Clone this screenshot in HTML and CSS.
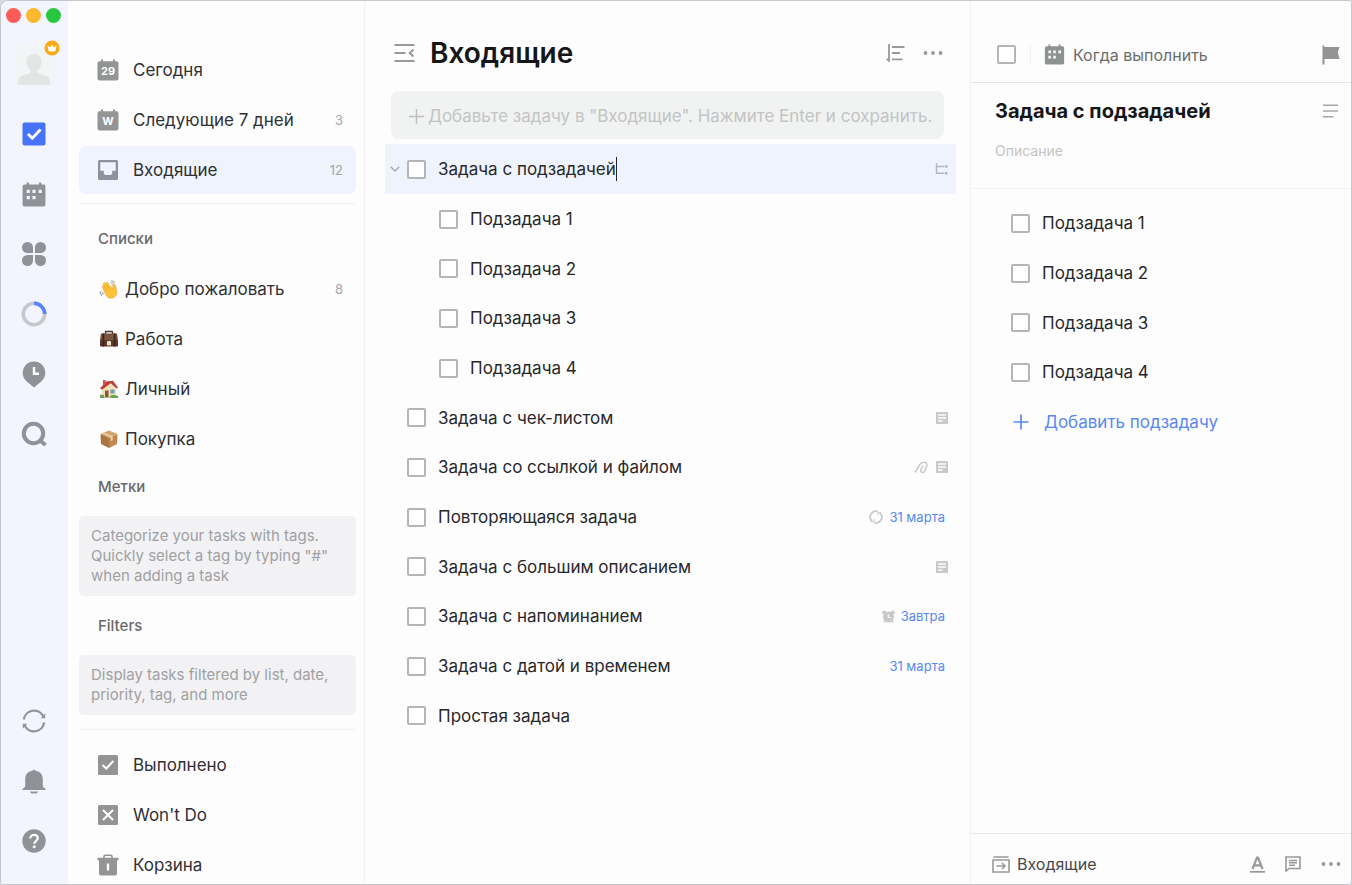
FILE: index.html
```html
<!DOCTYPE html>
<html lang="ru">
<head>
<meta charset="utf-8">
<meta name="viewport" content="width=device-width, initial-scale=1">
<title>Входящие</title>
<link rel="stylesheet" href="styles.css">
</head>
<body>
<svg class="defs" aria-hidden="true">
  <symbol id="i-note" viewBox="0 0 12 12"><path fill="currentColor" fill-rule="evenodd" d="M.5 0h11a.5.5 0 0 1 .5.5v11a.5.5 0 0 1-.5.5H.5a.5.5 0 0 1-.5-.5V.5A.5.500 0 0 1 .5 0zM2 2.300v1.500h8V2.300zM2 5.200v1.500h8V5.200zM2 8.300v1.500h4.500V8.300z"/></symbol>
  <symbol id="i-dots" viewBox="0 0 20 6"><g fill="currentColor"><circle cx="2.500" cy="3" r="1.900"/><circle cx="10" cy="3" r="1.900"/><circle cx="17.500" cy="3" r="1.900"/></g></symbol>
  <symbol id="i-calendar" viewBox="0 0 24 24"><path fill="currentColor" fill-rule="evenodd" d="M5 0.500h2.200V2.500h9.600V.5H19v2h2a2 2 0 0 1 2 2V21.500a2 2 0 0 1-2 2H3a2 2 0 0 1-2-2v-17a2 2 0 0 1 2-2h2zM5 7.500v3h3v-3zM10.500 7.500v3h3v-3zM16.500 7.500v3h3v-3zM5 13.500v3h3v-3zM10.500 13.500v3h3v-3z"/></symbol>
  <symbol id="i-day" viewBox="0 0 22 22"><path fill="currentColor" d="M4 .5h2v1.800h10V.5h2v1.800h1.500A2 2 0 0 1 21.500 4.300v15.200a2 2 0 0 1-2 2h-17a2 2 0 0 1-2-2V4.300a2 2 0 0 1 2-2H4z"/></symbol>
</svg>

<div class="app">
  <nav class="rail" aria-label="Разделы">
    <div class="lights">
      <button class="light red" aria-label="Закрыть"></button>
      <button class="light yellow" aria-label="Свернуть"></button>
      <button class="light green" aria-label="Развернуть"></button>
    </div>
    <button class="avatar" aria-label="Профиль">
      <svg width="40" height="40" viewBox="0 0 40 40"><rect width="40" height="40" rx="5" fill="#f3f4f5"/><path fill="#e3e4e4" d="M20 9c4.500 0 7.500 3 7.500 7.500 0 4-1.500 7-4 9v2.500c4 2 11 2 12 6.500l.5 5.500H4l.5-5.500c1-4.500 8-4.500 12-6.500v-2.500c-2.500-2-4-5-4-9C12.500 12 15.500 9 20 9z"/></svg>
      <svg class="crown" width="16" height="16" viewBox="0 0 16 16"><circle cx="8" cy="8" r="7.500" fill="#f9aa13"/><path fill="#fff" d="M3.500 5.500l2.500 2 2-3 2 3 2.500-2-1 5.500q-3.500 1-7 0z"/></svg>
    </button>
    <div class="rail-icons">
      <button aria-label="Задачи"><svg width="24" height="24" viewBox="0 0 24 24"><rect x=".5" y=".5" width="23" height="23" rx="2" fill="#4772fa"/><path d="M6 12l4.300 4.300L18.500 7.500" fill="none" stroke="#fff" stroke-width="2.800"/></svg></button>
      <button aria-label="Календарь"><svg width="26" height="25"><use href="#i-calendar"/></svg></button>
      <button aria-label="Матрица"><svg width="24" height="24" viewBox="0 0 24 24" fill="currentColor"><path d="M5.500 0A5.500 5.500 0 0 1 11 5.500V11H5.500a5.500 5.500 0 0 1 0-11zM18.500 0a5.500 5.500 0 0 1 0 11H13V5.500A5.500 5.500 0 0 1 18.500 0zM5.500 13H11v5.500A5.500 5.500 0 1 1 5.500 13zM13 13h5.500a5.500 5.500 0 1 1-5.500 5.500z"/></svg></button>
      <button aria-label="Фокус"><svg width="26" height="26" viewBox="0 0 26 26" fill="none" stroke-width="3.600"><circle cx="13" cy="13" r="10.700" stroke="#c6c8cc"/><path d="M13 2.300A10.700 10.700 0 0 1 23.700 13" stroke="#5585fa"/></svg></button>
      <button aria-label="Хронология"><svg width="24" height="27" viewBox="0 0 24 27"><path fill="currentColor" d="M12 .5a11.300 11.300 0 0 1 11.300 11.300c0 4.500-2.500 7.500-5 9.500L12 26.500l-6.300-5.200c-2.500-2-5-5-5-9.500A11.300 11.300 0 0 1 12 .5z"/><path d="M12 6v6.700h5" fill="none" stroke="#fff" stroke-width="2.400"/></svg></button>
      <button aria-label="Поиск"><svg width="26" height="26" viewBox="0 0 26 26" fill="none" stroke="currentColor"><circle cx="12.500" cy="12.500" r="9.700" stroke-width="4"/><path d="M18 18.500l6.500 5.500" stroke-width="3.800"/></svg></button>
    </div>
    <div class="rail-icons bottom">
      <button aria-label="Синхронизация"><svg width="24" height="24" viewBox="0 0 24 24" fill="none" stroke="currentColor" stroke-width="2.200"><path d="M1.800 10.500A10.300 10.300 0 0 1 21.300 7.500M22.200 13.500A10.300 10.300 0 0 1 2.700 16.500"/><path fill="currentColor" stroke="none" d="M18.800 9.300h4.400V4.300zM5.200 14.700H.8v5z"/></svg></button>
      <button aria-label="Уведомления"><svg width="24" height="25" viewBox="0 0 24 25" fill="currentColor"><path d="M12 .5l1.800 1.300c4.500.8 7 4 7 8.500v7.400L23.500 20v1H.5v-1l2.700-2.300v-7.400c0-4.500 2.500-7.700 7-8.500zM8 22.500h8v.5q-1 1.500-2.500 1.500h-3Q9 24.500 8 23z"/></svg></button>
      <button aria-label="Справка"><svg width="24" height="24" viewBox="0 0 24 24"><circle cx="12" cy="12" r="11.700" fill="currentColor"/><path d="M8.300 9.500c0-5 7.500-4.500 7.500-.3 0 2.500-3.600 2.800-3.600 5.600" fill="none" stroke="#fff" stroke-width="2.200"/><circle cx="12.200" cy="17.800" r="1.500" fill="#fff"/></svg></button>
    </div>
  </nav>

  <aside class="sidebar">
    <ul class="nav">
      <li><a class="item" href="#"><span class="day"><svg width="22" height="22"><use href="#i-day"/></svg><b>29</b></span><span class="name">Сегодня</span></a></li>
      <li><a class="item" href="#"><span class="day"><svg width="22" height="22"><use href="#i-day"/></svg><b>W</b></span><span class="name">Следующие 7 дней</span><span class="count">3</span></a></li>
      <li><a class="item active" href="#" aria-current="page"><svg width="22" height="22" viewBox="0 0 22 22"><path fill="currentColor" fill-rule="evenodd" d="M2.500 1h17A1.500 1.500 0 0 1 21 2.500v17a1.500 1.500 0 0 1-1.500 1.500h-17A1.500 1.500 0 0 1 1 19.500v-17A1.500 1.500 0 0 1 2.500 1zM3.300 3.300v8.500h3.500v2.400q0 1.800 1.800 1.800h4.800q1.800 0 1.800-1.800v-2.400h3.500V3.300z"/></svg><span class="name">Входящие</span><span class="count">12</span></a></li>
    </ul>
    <hr class="rule">
    <h2 class="heading">Списки</h2>
    <ul class="nav">
      <li><a class="item emoji" href="#"><svg width="20" height="20" viewBox="0 0 20 20"><path fill="#fbc43a" stroke="#e49a1e" stroke-width=".6" d="M3.500 8.500c-.8-1.400.8-2.400 1.800-1.200l-.8-1.800c-.7-1.500 1.200-2.400 2-1l.5.700c-.5-1.500 1.200-2.300 2.100-.9l4.600 5.900.1-3.400c0-1.900 2.300-2.100 2.700-.2l1.200 5.600c.6 3-1 5.400-3.500 6.500-2.400 1-5.200.4-6.700-1.700z"/><path d="M5 7.500l4 5M7 5.500l4.200 5.200" stroke="#e49a1e" stroke-width=".7"/><path d="M12 1.500q2.500.3 3.500 2.500M11.500 3.500q1.700.2 2.300 1.700M1 12.500q0 2.500 2.200 4M3 12.500q.3 1.700 1.700 2.600" fill="none" stroke="#9fa2a8" stroke-width="1.200"/></svg><span class="name">Добро пожаловать</span><span class="count">8</span></a></li>
      <li><a class="item emoji" href="#"><svg width="20" height="20" viewBox="0 0 20 20"><path d="M6.500 5V3.200q0-.7.7-.7h5.600q.7 0 .7.700V5" fill="none" stroke="#4b3328" stroke-width="1.400"/><path fill="#79543f" d="M2 4.500h16l1 6.500v6H1v-6z"/><path fill="#5a3a2d" d="M1 11h18v6.500H1z"/><path fill="#38251f" d="M3.500 4.500h1.800v13H3.500zM14.700 4.500h1.800v13h-1.800z"/><rect x="8" y="12" width="4" height="4.500" rx=".8" fill="#f0ddc9"/></svg><span class="name">Работа</span></a></li>
      <li><a class="item emoji" href="#"><svg width="20" height="20" viewBox="0 0 20 20"><path fill="#efe0bb" d="M3 8l6-5 8 5v10H3z"/><path fill="#bd3d39" d="M1 9.500L7 2.500l7-.8 5 7-1.300.8-6-5.200-8.500 6.200z"/><path fill="#d7514a" d="M4 1h2.500v4L4 7z"/><path fill="#89563a" d="M6 11.500h3.500V18H6z"/><path fill="#6f9fb5" d="M11.500 10.500h4v4h-4z"/><path fill="#67a546" d="M1 16.500q2-2 4 0V19H1zM11 17q3-2 8 0v2h-8z"/><path fill="#b9b2a5" d="M5 18h7v1H5z"/></svg><span class="name">Личный</span></a></li>
      <li><a class="item emoji" href="#"><svg width="20" height="20" viewBox="0 0 20 20"><path fill="#d5a36b" d="M1.500 5L10 1.500 18.500 5 10 9z"/><path fill="#a87543" d="M1.500 5L10 9v10L2 15z"/><path fill="#bf8850" d="M18.500 5L10 9v10l8-4z"/><path fill="#efd5a7" d="M5 3.600L13.700 7.300v4l-1.900.8V8.200L3.300 4.300z"/></svg><span class="name">Покупка</span></a></li>
    </ul>
    <h2 class="heading tags">Метки</h2>
    <p class="hint">Categorize your tasks with tags. Quickly select a tag by typing "#" when adding a task</p>
    <h2 class="heading filters">Filters</h2>
    <p class="hint">Display tasks filtered by list, date, priority, tag, and more</p>
    <hr class="rule low">
    <ul class="nav last">
      <li><a class="item" href="#"><svg width="22" height="22" viewBox="0 0 22 22"><rect x="1" y="1" width="20" height="20" rx="1.500" fill="currentColor"/><path d="M5.500 11l3.800 3.500 7-7.500" fill="none" stroke="#fff" stroke-width="2"/></svg><span class="name">Выполнено</span></a></li>
      <li><a class="item" href="#"><svg width="22" height="22" viewBox="0 0 22 22"><rect x="1" y="1" width="20" height="20" rx="1.500" fill="currentColor"/><path d="M6 6l10 10M16 6L6 16" stroke="#fff" stroke-width="2"/></svg><span class="name">Won't Do</span></a></li>
      <li><a class="item" href="#"><svg width="22" height="22" viewBox="0 0 22 22"><path d="M7 4V2.500Q7 1.300 8.200 1.300h5.600Q15 1.300 15 2.500V4" fill="none" stroke="currentColor" stroke-width="1.600"/><path fill="currentColor" fill-rule="evenodd" d="M.5 3.800h21v2.400H20v13.300a2 2 0 0 1-2 2H4a2 2 0 0 1-2-2V6.200H.500zM9.800 9.500v7h2.400v-7z"/></svg><span class="name">Корзина</span></a></li>
    </ul>
  </aside>

  <main class="main">
    <header class="main-head">
      <button aria-label="Скрыть панель"><svg width="21" height="20" viewBox="0 0 21 20" fill="none" stroke="currentColor" stroke-width="2"><path d="M.5 2h20M.5 10h11M.5 18h20M19.500 6.500L15.800 10l3.700 3.500"/></svg></button>
      <h1>Входящие</h1>
      <button aria-label="Сортировка"><svg width="19" height="18" viewBox="0 0 19 18" fill="none" stroke="currentColor" stroke-width="1.800"><path d="M3 0v17L.8 14.800M6 3h12.500M6 9h8M6 15.300h10.500"/></svg></button>
      <button aria-label="Ещё"><svg width="20" height="6"><use href="#i-dots"/></svg></button>
    </header>
    <div class="add">
      <svg width="17" height="17" viewBox="0 0 17 17" stroke="currentColor" stroke-width="1.500"><path d="M8.500 1v15M1 8.500h15"/></svg>
      <input type="text" aria-label="Новая задача" placeholder='Добавьте задачу в "Входящие". Нажмите Enter и сохранить.'>
    </div>
    <ul class="tasks">
      <li class="selected"><button class="chevron" aria-label="Свернуть подзадачи"><svg width="10" height="6" viewBox="0 0 10 6" fill="none" stroke="currentColor" stroke-width="1.400"><path d="M.7.700L5 5 9.300.700"/></svg></button><label><input type="checkbox"><span class="editing">Задача с подзадачей</span></label><span class="meta"><svg width="13" height="12" viewBox="0 0 13 12" fill="none" stroke="currentColor" stroke-width="1.400"><path d="M1.500 0v10.300h7.500M1.500 3.500h7.500"/><path d="M9.800 3.500h2.700M9.800 10.300h2.700" stroke-width="2.400"/></svg></span></li>
      <li class="sub"><label><input type="checkbox"><span>Подзадача 1</span></label></li>
      <li class="sub"><label><input type="checkbox"><span>Подзадача 2</span></label></li>
      <li class="sub"><label><input type="checkbox"><span>Подзадача 3</span></label></li>
      <li class="sub"><label><input type="checkbox"><span>Подзадача 4</span></label></li>
      <li><label><input type="checkbox"><span>Задача с чек-листом</span></label><span class="meta"><svg width="12" height="12"><use href="#i-note"/></svg></span></li>
      <li><label><input type="checkbox"><span>Задача со ссылкой и файлом</span></label><span class="meta"><svg width="14" height="13" viewBox="0 0 14 13" fill="none" stroke="currentColor" stroke-width="1.500"><path d="M1 11.500L5.500 4Q7.500.800 10.500 1.200 13.800 2.200 12.500 5.500L10.500 10.300Q9.200 12.200 7.500 11.200 6.200 10.200 7 8.500L9 4.500"/></svg><svg width="12" height="12"><use href="#i-note"/></svg></span></li>
      <li><label><input type="checkbox"><span>Повторяющаяся задача</span></label><span class="meta dated"><svg width="14" height="14" viewBox="0 0 14 14" fill="none" stroke="currentColor" stroke-width="1.800"><path d="M8.500 1.400A5.800 5.800 0 0 0 3 11.200M5.500 12.600A5.800 5.800 0 0 0 11 2.800"/><path d="M2 11.600h3V9M12 2.400H9V5" stroke-width="1"/></svg><time>31 марта</time></span></li>
      <li><label><input type="checkbox"><span>Задача с большим описанием</span></label><span class="meta"><svg width="12" height="12"><use href="#i-note"/></svg></span></li>
      <li><label><input type="checkbox"><span>Задача с напоминанием</span></label><span class="meta dated"><svg width="13" height="13" viewBox="0 0 13 13"><g fill="currentColor"><circle cx="6.500" cy="7" r="5.500"/><circle cx="2.200" cy="2.500" r="2"/><circle cx="10.800" cy="2.500" r="2"/><path d="M2 10l-.5 2.500h2.500zM11 10l.5 2.500H9z"/></g><path d="M6.300 4.300v3.200h2.400" fill="none" stroke="#fff" stroke-width="1.100"/></svg><time>Завтра</time></span></li>
      <li><label><input type="checkbox"><span>Задача с датой и временем</span></label><span class="meta dated"><time>31 марта</time></span></li>
      <li><label><input type="checkbox"><span>Простая задача</span></label></li>
    </ul>
  </main>

  <section class="detail" aria-label="Задача">
    <header class="detail-head">
      <input type="checkbox" aria-label="Выполнить задачу">
      <button class="when"><svg width="21" height="21"><use href="#i-calendar"/></svg>Когда выполнить</button>
      <button class="end" aria-label="Приоритет"><svg width="18" height="20" viewBox="0 0 18 20" fill="currentColor"><path d="M.500.500h2V2H17.500l-1.700 5.500 1.700 6.500h-15v5.500h-2z"/></svg></button>
    </header>
    <div class="detail-title">
      <div class="title-row">
        <h2>Задача с подзадачей</h2>
        <button aria-label="Описание или список"><svg width="15" height="14" viewBox="0 0 15 14" stroke="currentColor" stroke-width="1.600"><path d="M0 1.200h15M0 7h15M0 12.800h10.500"/></svg></button>
      </div>
      <input class="desc" type="text" placeholder="Описание" aria-label="Описание">
    </div>
    <ul class="tasks subtasks">
      <li><label><input type="checkbox"><span>Подзадача 1</span></label></li>
      <li><label><input type="checkbox"><span>Подзадача 2</span></label></li>
      <li><label><input type="checkbox"><span>Подзадача 3</span></label></li>
      <li><label><input type="checkbox"><span>Подзадача 4</span></label></li>
    </ul>
    <button class="add-sub"><svg width="16" height="16" viewBox="0 0 16 16" stroke="currentColor" stroke-width="1.700"><path d="M8 .5v15M.5 8h15"/></svg>Добавить подзадачу</button>
    <footer class="detail-foot">
      <button class="move"><svg width="18" height="17" viewBox="0 0 18 17" fill="none" stroke="currentColor" stroke-width="1.600"><path d="M1.500 1h15M1 4h16v12H1zM4.500 10h8.500M10 7l3 3-3 3"/></svg><span>Входящие</span></button>
      <button aria-label="Формат"><svg width="15" height="17" viewBox="0 0 15 17" fill="none" stroke="currentColor"><path d="M2.500 13L7 1.500h1L12.500 13M4.300 9.300h6.400" stroke-width="2.200"/><path d="M0 15.800h15" stroke-width="1.800"/></svg></button>
      <button aria-label="Комментарии"><svg width="16" height="16" viewBox="0 0 16 16" fill="none" stroke="currentColor" stroke-width="1.600"><path d="M1 1h14v11.500H4L1 15zM4 4.500h8M4 6.800h8M4 9.200h6"/></svg></button>
      <button aria-label="Ещё"><svg width="20" height="6"><use href="#i-dots"/></svg></button>
    </footer>
  </section>
</div>
</body>
</html>
```
FILE: styles.css
```css
* { box-sizing: border-box; }
body {
  margin: 0;
  background: #d9dadd;
  color: #303033;
  font-family: Inter, "Liberation Sans", sans-serif;
  font-size: 17px;
  line-height: 24px;
}
ul { list-style: none; margin: 0; padding: 0; }
h1, h2, p { margin: 0; }
button, input { font: inherit; color: inherit; }
button {
  display: flex;
  align-items: center;
  padding: 0;
  border: 0;
  background: none;
}
svg { display: block; flex: none; }
.defs { position: absolute; width: 0; height: 0; }
a { color: inherit; text-decoration: none; }

.app {
  display: flex;
  height: 100vh;
  overflow: hidden;
  border: 1px solid #c6c7cc;
  border-radius: 8px 3px 3px 3px;
  background: #fdfdfe;
}

.rail {
  display: flex;
  flex: none;
  flex-direction: column;
  align-items: center;
  width: 67px;
  padding-right: 2px;
  padding-bottom: 31px;
  background: #f2f5fe;
  color: #8f9397;
}
.lights { display: flex; gap: 5px; padding: 7px 0 0; }
.light { width: 15px; height: 15px; border-radius: 50%; }
.red { background: #fc5b57; }
.yellow { background: #fcb82e; }
.green { background: #27c73f; }
.avatar { position: relative; margin-top: 22px; }
.crown { position: absolute; top: -5px; right: -6px; }
.rail-icons { display: flex; flex-direction: column; margin-top: 19px; }
.rail-icons button { justify-content: center; width: 40px; height: 60px; }
.bottom { margin-top: auto; margin-bottom: -18px; }

.sidebar {
  flex: none;
  width: 297px;
  padding: 45px 8px 0 11px;
  border-right: 1px solid #f3f3f6;
  overflow: hidden;
}
.nav { display: flex; flex-direction: column; gap: 2px; }
.item {
  display: flex;
  align-items: center;
  gap: 14px;
  height: 48px;
  padding: 0 13px 0 18px;
  border-radius: 7px;
}
.item > svg, .day { color: #939595; }
.item.active { background: #eff3fd; }
.item.active > svg { color: #8c929b; }
.item.emoji { gap: 6px; padding-left: 20px; }
.name { flex: 1; }
.count { color: #a5a6a9; font-size: 13px; }
.day { display: grid; place-items: center; }
.day > * { grid-area: 1 / 1; }
.day b { padding-top: 2px; color: #fff; font-size: 11px; line-height: 14px; }
.rule { height: 1px; margin: 9px 0 13px; border: 0; background: #f0f1f5; }
.rule.low { margin: 14px 0 11px; }
.heading {
  margin-bottom: 4px;
  padding-left: 19px;
  color: #68696c;
  font-size: 15px;
  font-weight: 500;
  line-height: 44px;
}
.tags { margin-top: 2px; }
.filters { margin-top: 8px; }
.hint {
  margin-top: 7px;
  padding: 10px 12px;
  border-radius: 5px;
  background: #f2f2f4;
  color: #a0a0a3;
  font-size: 15px;
  line-height: 20px;
}

.main {
  flex: 1;
  min-width: 0;
  padding: 24px 14px 0 20px;
  border-right: 1px solid #f1f1f3;
}
.main-head {
  display: flex;
  align-items: center;
  gap: 18px;
  height: 56px;
  padding: 0 13px 0 9px;
  color: #97999a;
}
.main-head h1 {
  flex: 1;
  margin-left: -3px;
  color: #161618;
  font-size: 28px;
  font-weight: 600;
  line-height: 36px;
}
.add {
  display: flex;
  align-items: center;
  gap: 3px;
  height: 48px;
  margin: 10px 12px 5px 6px;
  padding: 2px 12px 0 17px;
  border-radius: 8px;
  background: #f1f2f2;
  color: #bfc0c0;
}
.add input {
  flex: 1;
  min-width: 0;
  padding: 0;
  border: 0;
  outline: 0;
  background: none;
}
::placeholder { color: #c3c4c4; opacity: 1; }

.tasks li {
  display: flex;
  align-items: center;
  height: 50px;
  padding: 0 8px 0 22px;
  color: #28282b;
}
.tasks li:nth-child(3n) { height: 49px; }
.tasks .sub { padding-left: 54px; }
.tasks .selected { gap: 7px; padding-left: 5px; background: #eff3fd; }
.tasks label { display: flex; flex: 1; align-items: center; gap: 12px; }
input[type="checkbox"] {
  flex: none;
  width: 19px;
  height: 19px;
  margin: 0;
  border: 2px solid #b4b5b8;
  border-radius: 2px;
  background: #fff;
  appearance: none;
}
.chevron { color: #a5a8b0; }
.editing { border-right: 1px solid #222; }
.meta { display: flex; align-items: center; gap: 8px; color: #c9c9cb; }
.selected .meta { color: #b3b6c4; }
.dated { gap: 6px; padding-right: 3px; }
time { color: #5888f2; font-size: 13px; }

.detail {
  display: flex;
  flex: none;
  flex-direction: column;
  width: 380px;
}
.detail-head {
  display: flex;
  align-items: center;
  height: 82px;
  padding: 26px 11px 0 26px;
  border-bottom: 1px solid #e6e6e8;
  color: #939595;
}
.when {
  gap: 8px;
  height: 20px;
  margin-left: 14px;
  padding-left: 13px;
  border-left: 1px solid #f0f0f2;
  color: #6b6c6e;
  font-size: 16px;
}
.when svg { color: #8f9292; }
.end { margin-left: auto; }
.detail-title {
  padding: 14px 13px 25px 24px;
  border-bottom: 1px solid #f2f2f5;
}
.title-row {
  display: flex;
  align-items: center;
  justify-content: space-between;
  color: #a5a6a8;
}
.title-row h2 {
  color: #161618;
  font-size: 20px;
  font-weight: 700;
  line-height: 28px;
}
.desc {
  width: 100%;
  height: 24px;
  margin-top: 14px;
  padding: 0;
  border: 0;
  outline: 0;
  background: none;
  font-size: 14px;
}
.subtasks { padding-top: 9px; }
.subtasks li { padding-left: 40px; }
.add-sub {
  gap: 15px;
  height: 50px;
  padding-left: 42px;
  color: #5888f2;
}
.detail-foot {
  display: flex;
  align-items: center;
  gap: 20px;
  height: 51px;
  margin-top: auto;
  padding: 10px 10px 0 21px;
  border-top: 1px solid #e9e9ec;
  color: #97999a;
}
.move { gap: 7px; margin-right: auto; font-size: 16px; }
.move span { color: #48494c; }
```
